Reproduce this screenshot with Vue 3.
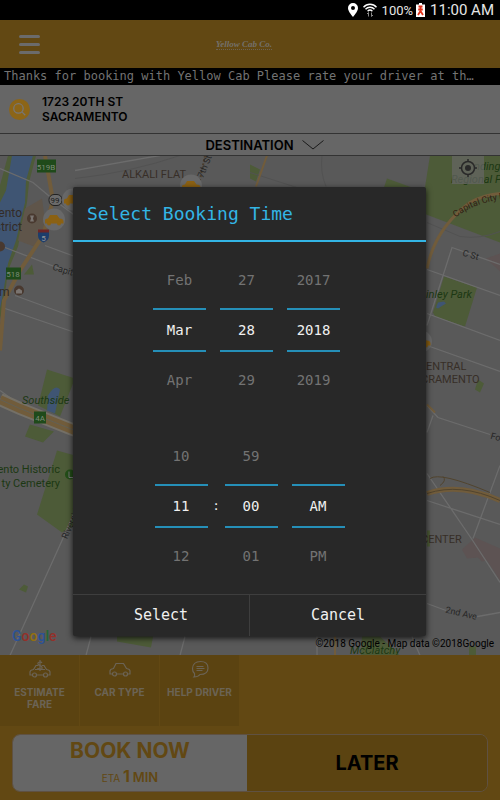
<script setup>
import { ref, computed } from 'vue'

const message = 'Thanks for booking with Yellow Cab Please rate your driver at th…'

const months = ['Jan', 'Feb', 'Mar', 'Apr', 'May', 'Jun', 'Jul', 'Aug', 'Sep', 'Oct', 'Nov', 'Dec']
const range = (from, to, pad = 1) =>
  Array.from({ length: to - from + 1 }, (_, i) => String(from + i).padStart(pad, '0'))

const dateWheels = ref([
  { name: 'Month', values: months, index: 2, wrap: true },
  { name: 'Day', values: range(1, 31), index: 27, wrap: true },
  { name: 'Year', values: range(2010, 2030), index: 8, wrap: false }
])
const timeWheels = ref([
  { name: 'Hour', values: range(1, 12), index: 10, wrap: true },
  { name: 'Minute', values: range(0, 59, 2), index: 0, wrap: true },
  { name: 'AM or PM', values: ['AM', 'PM'], index: 0, wrap: false }
])
const groups = computed(() => [
  { id: 'date', wheels: dateWheels.value },
  { id: 'time', wheels: timeWheels.value }
])

function at(wheel, step) {
  const n = wheel.values.length
  const i = wheel.index + step
  return wheel.wrap ? wheel.values[(i + n) % n] : wheel.values[i] ?? ''
}
function move(wheel, step) {
  if (at(wheel, step)) wheel.index = (wheel.index + step + wheel.values.length) % wheel.values.length
}

const googleLetters = [
  ['G', '#2c5296'], ['o', '#93302a'], ['o', '#94700f'], ['g', '#2c5296'], ['l', '#226834'], ['e', '#93302a']
]
const cars = [[73, 199], [54, 219], [191, 185], [421, 341]]
</script>

<template>
  <div class="screen">
    <div class="status">
      <svg class="pin" viewBox="0 0 10 14"><path fill="#fff" fill-rule="evenodd" d="M5 0a5 5 0 0 0-5 5c0 3 3 6.500 5 9 2-2.500 5-6 5-9a5 5 0 0 0-5-5zm0 3a2 2 0 1 1 0 4 2 2 0 0 1 0-4z" /></svg>
      <svg class="wifi" viewBox="0 0 14 14" fill="none" stroke="#fff" stroke-width="1.400">
        <path d="M.5 4.200C4 .3 10 .3 13.500 4.200M2.500 6.300c2.600-2.700 6.400-2.700 9 0M4.600 8.200c1.500-1.400 3.300-1.400 4.800 0" />
        <path stroke="#888" stroke-width="1" d="M5.500 13.500V9.500L4 11M8.500 9.500v4L10 12" />
      </svg>
      <span class="percent">100%</span>
      <svg class="battery" viewBox="0 0 9 14"><path fill="#fff" d="M3 0h3v1.500h3V14H0V1.500h3z" /><path fill="none" stroke="#e0341c" stroke-width="1.800" d="M2.500 3.500h4M4.500 4v4M2 12l2.500-4L7 12M2.200 6.500l4.600 0" /></svg>
      <time>11:00 AM</time>
    </div>

    <header class="topbar">
      <button class="menu" aria-label="Menu"><i></i><i></i><i></i></button>
      <div class="brand">Yellow Cab Co.</div>
    </header>

    <p class="ticker">{{ message }}</p>

    <section class="pickup">
      <button class="search" aria-label="Search address">
        <svg viewBox="0 0 20 20" fill="none" stroke="#777" stroke-width="1.200"><circle cx="9" cy="9" r="4.500" /><path d="M12.500 12.500l3 3" /></svg>
      </button>
      <address>1723 20TH ST<br>SACRAMENTO</address>
    </section>

    <button class="destination">
      <span>DESTINATION</span>
      <svg viewBox="0 0 22 10" fill="none" stroke="#1a1a1a"><path d="M.5 .5L11 9L21.500 .5" /></svg>
    </button>

    <main class="map">
      <svg class="canvas" viewBox="0 155 500 500" preserveAspectRatio="xMidYMid slice" role="img" aria-label="Map of Sacramento">
        <rect y="155" width="500" height="500" fill="#595959" />
        <g fill="#4d5b38">
          <path d="M0 185L8 155H36L29 182L27 202L18 246L8 270L3 310L0 318z" />
          <path d="M430 155H500V242L421 212z" /><path d="M387 178L412 187H384z" />
          <path d="M444 276L477 287L465 326L435 316L433 312z" />
          <path d="M47 369L75 378L60 416L38 405z" /><path d="M30 424L54 431L43 442L25 436z" />
          <path d="M57 450L75 455V525L62 532L37 514z" /><path d="M24 584L28 586L26 592L19 589z" />
          <path d="M250 164L260 169L256 181L250 178z" /><path d="M117 636H153L151 647L117 641z" />
          <path d="M478 379L484 383L480 392L475 389z" /><path d="M362 636H380L400 655H361z" />
          <path d="M469 646H476V655H469z" /><path d="M24 274L32 264L34 274z" /><path d="M427 530h3v16h-3z" />
        </g>
        <g fill="#3f5573">
          <path d="M0 202L6 190L12 155H33L26 180L25 202L16 240L8 263L3 293L0 308z" />
          <path d="M48 395Q55 383 60 389L55 413L47 410z" /><path d="M436 307l2-5 6-1 2 2-5 3-3 2z" />
        </g>
        <path fill="#5f554a" d="M25 208L42 198L47 235L34 246L18 240z" />
        <path fill="#5d5353" d="M486 258L500 253V271zM462 549L475 537L500 548V580L487 560L482 561L478 557L467 558z" />
        <g fill="none" stroke="#6c6c6c" stroke-width="1.300">
          <path d="M0 168L33 182L52 198L75 215M5 247L75 274M45 245L75 256M15 295L75 317M5 308L75 332M0 390L14 400M75 510L62 540L10 655M75 170Q130 160 160 155" />
          <path d="M427 325L452 247L500 264M427 269L500 295M427 313L500 340M427 345L500 371M427 405L438 417L490 434M427 432L433 415M427 473L472 539L500 582M427 500L500 524M473 538L500 465M427 603L446 610M472 617L500 612" />
          <path d="M86 655L91 636M180 655L185 636M317 636V655M412 636L420 655" />
        </g>
        <path fill="none" stroke="#525252" d="M427 222L460 236Q480 239 500 231M75 178Q130 172 180 155M250 172L300 188M322 155Q320 172 326 186" />
        <g fill="none" stroke="#715c3b">
          <path stroke-width="4" d="M45 155L53 200L43 235L20 270L4 300L0 350" />
          <path stroke-width="3" d="M427 268Q435 228 470 202Q485 194 500 193" />
          <path stroke-width="2" d="M267 155L256 186M335 636V655M427 404L435 412" />
          <path stroke="#747067" stroke-width="13" d="M0 399L20 408L75 430" />
          <path stroke-width="9" d="M0 399L20 408L75 430" />
          <path stroke="#626055" stroke-width="1" d="M0 399L20 408L75 430" />
          <path stroke-width="5" d="M427 493Q460 482 500 500" />
          <path stroke="#51442e" stroke-width="1" d="M427 493Q460 482 500 500M430 478Q440 471 490 492M440 485q7-5 3-9" />
          <path stroke="#4a3d2d" stroke-width="2" stroke-dasharray="2 2" d="M205 155L199 184" />
        </g>

        <g class="sign">
          <rect x="37" y="159" width="19" height="13" /><text x="46" y="169">519B</text>
          <rect x="6" y="267" width="15" height="12" /><text x="13" y="276">518</text>
          <rect x="34" y="411" width="12" height="12" /><text x="40" y="420">4A</text>
        </g>
        <rect x="49" y="194" width="13" height="11" rx="5" fill="#6b6b6b" stroke="#222" />
        <text x="55" y="202" class="route">99</text>
        <path d="M38 230h11v5q0 5-5.500 7q-5.500-2-5.500-7z" fill="#1d3d6b" /><path d="M38 229h11v3H38z" fill="#6d2626" />
        <text x="43.500" y="240" class="route light">5</text>
        <g fill="#49392f"><circle cx="32" cy="218" r="5" /><circle cx="0" cy="246" r="5" /><circle cx="19" cy="290" r="5" /></g>
        <path d="M30 215h4l-1 3 1 3h-4l1-3zM16 290l3-2 3 2v3h-6z" fill="#7a7470" />
        <circle cx="70" cy="474" r="5" fill="#234d18" /><path d="M69 471v6h4" stroke="#777" fill="none" />

        <g class="place">
          <text x="22" y="216" text-anchor="end">ento</text><text x="22" y="230" text-anchor="end">strict</text><text x="-1" y="295">m</text>
        </g>
        <g class="area">
          <text x="122" y="177">ALKALI FLAT</text><text x="426" y="369">ENTRAL</text><text x="421" y="382">CRAMENTO</text><text x="421" y="542">CENTER</text>
        </g>
        <g class="park">
          <text x="22" y="403">Southside</text><text x="426" y="297">inley Park</text><text x="474" y="169">nding</text><text x="451" y="182">Regional Par</text><text x="350" y="653">McClatchy</text>
        </g>
        <g class="green-place"><text x="60" y="472" text-anchor="end">ento Historic</text><text x="60" y="486" text-anchor="end">ty Cemetery</text></g>
        <g class="street">
          <text transform="translate(52 269) rotate(17)">Capitol</text><text transform="translate(67 539) rotate(-66)">Riverside</text>
          <text transform="translate(462 255) rotate(16)">C St</text><text transform="translate(490 438) rotate(16)">Fols</text>
          <text transform="translate(445 612) rotate(13)">2nd Ave</text><text transform="translate(203 178) rotate(-68)">7th St</text>
          <path id="freeway" fill="none" d="M456 217Q474 201 515 197" />
          <text class="freeway"><textPath href="#freeway">Capital City Fre</textPath></text>
        </g>
        <g v-for="([x, y], i) in cars" :key="i" :transform="`translate(${x} ${y})`">
          <circle r="11" fill="#686868" />
          <path fill="#8b6113" d="M-9 1q0-2 3-2l2-3.500h7l2.500 3.500q4 0 4 3v2H-9z" />
          <circle cx="-5" cy="4" r="2" fill="#8b6113" /><circle cx="5" cy="4" r="2" fill="#8b6113" />
        </g>
      </svg>
      <button class="locate" aria-label="My location">
        <svg viewBox="0 0 18 18" fill="none" stroke="#292929" stroke-width="1.500"><circle cx="9" cy="9" r="6.500" /><circle cx="9" cy="9" r="3" fill="#292929" stroke="none" /><path d="M9 0v3M9 15v3M0 9h3M15 9h3" /></svg>
      </button>
      <div class="google"><span v-for="([ch, color], i) in googleLetters" :key="i" :style="{ color }">{{ ch }}</span></div>
      <small class="credit">©2018 Google - Map data ©2018Google</small>
    </main>

    <footer class="bottom">
      <nav class="tiles">
        <button>
          <svg viewBox="0 0 22 18" fill="none" stroke="#6b6355" stroke-width="1.200">
            <path d="M3.500 15H1v-3q0-2 3.500-2.500L7 5.500h2M13 5.500h2l2.500 4q3.500.5 3.500 2.500v3h-2.500M7.500 15h7M6 9.500h10" />
            <circle cx="5.500" cy="15" r="2" /><circle cx="16.500" cy="15" r="2" />
            <path d="M13 3q-1-1.500-2.500-1Q8.500 2.500 9 4t2 1.500T13 7.500t-2 1.500-2.500-1M11 0v11" />
          </svg>
          <span>ESTIMATE FARE</span>
        </button>
        <button>
          <svg viewBox="0 0 22 18" fill="none" stroke="#6b6355" stroke-width="1.200">
            <path d="M3.500 14H1v-3q0-2 3.500-2.500L7 3.500h7.500l3 5Q21 9 21 11v3h-2.500M7.500 14h7" />
            <circle cx="5.500" cy="14" r="2" /><circle cx="16.500" cy="14" r="2" />
          </svg>
          <span>CAR TYPE</span>
        </button>
        <button>
          <svg viewBox="0 0 22 18" fill="none" stroke="#6b6355" stroke-width="1.200">
            <path d="M5 17q1-1 .5-3.500Q3.500 12 3.500 8.500 4 1.500 11.500 1.500t7.500 6.500-8 6.500Q9 17 5 17z" /><path d="M7.500 6.500h7M7.500 8.500h8M7.500 10.500h6" />
          </svg>
          <span>HELP DRIVER</span>
        </button>
      </nav>
      <div class="booking">
        <button class="now"><strong>BOOK NOW</strong><span class="eta">ETA <b>1</b> <em>MIN</em></span></button>
        <button class="later">LATER</button>
      </div>
    </footer>

    <div class="overlay">
      <section class="dialog" role="dialog" aria-modal="true" aria-labelledby="dialog-title">
        <h2 id="dialog-title">Select Booking Time</h2>
        <div v-for="group in groups" :key="group.id" class="picker" :class="group.id">
          <template v-for="(wheel, i) in group.wheels" :key="wheel.name">
            <span v-if="group.id === 'time' && i === 1" class="colon">:</span>
            <div class="wheel">
              <button @click="move(wheel, -1)">{{ at(wheel, -1) }}</button>
              <input :value="at(wheel, 0)" :aria-label="wheel.name" readonly>
              <button @click="move(wheel, 1)">{{ at(wheel, 1) }}</button>
            </div>
          </template>
        </div>
        <div class="actions"><button>Select</button><button>Cancel</button></div>
      </section>
    </div>
  </div>
</template>

<style>
body { margin: 0; background: #000; }
</style>

<style scoped>
.screen {
  position: relative;
  display: flex;
  flex-direction: column;
  min-height: 100vh;
  color: #000;
  font-family: Inter, "Open Sans", sans-serif;
}
button, input { margin: 0; padding: 0; border: 0; background: none; color: inherit; font: inherit; }
button { cursor: pointer; }
svg { display: block; }

.status {
  display: flex;
  align-items: center;
  justify-content: flex-end;
  height: 20px;
  padding-right: 6px;
  color: #e6e6e6;
  font-family: Roboto, sans-serif;
  font-size: 15px;
}
.pin { width: 10px; height: 14px; margin-right: 5px; }
.wifi { width: 14px; height: 14px; margin-right: 5px; }
.percent { font-size: 13px; }
.battery { width: 9px; height: 14px; margin: 0 5px 0 3px; }

.topbar {
  display: grid;
  grid-template-columns: 1fr auto 1fr;
  align-items: center;
  height: 48px;
  padding-right: 12px;
  box-sizing: border-box;
  background: #624813;
}
.menu { display: flex; flex-direction: column; gap: 5px; width: 21px; margin-left: 19px; }
.menu i { height: 3px; border-radius: 2px; background: #6b6b6b; }
.brand {
  border-bottom: 1px dotted #6b6355;
  color: #74706a;
  font: italic bold 9px/10px "Liberation Serif", serif;
}
.ticker {
  height: 17px;
  margin: 0;
  padding: 0 4px;
  overflow: hidden;
  background: #000;
  color: #737373;
  font: 12px/17px "DejaVu Sans Mono", monospace;
  white-space: nowrap;
}
.pickup { display: flex; align-items: center; gap: 12px; height: 48px; padding-left: 9px; background: #666; }
.search { width: 21px; height: 21px; border-radius: 50%; background: #8c6517; }
address { font: 600 12px/15px Inter, sans-serif; }
.destination {
  display: flex;
  align-items: center;
  justify-content: center;
  gap: 8px;
  height: 23px;
  padding-left: 29px;
  border-top: 1px solid #333;
  border-bottom: 1px solid #333;
  background: #666;
  font-size: 13px;
  font-weight: 600;
}
.destination svg { width: 22px; height: 10px; }

.map { position: relative; flex: 1; min-height: 499px; overflow: hidden; }
.canvas { position: absolute; width: 100%; height: 100%; }
.canvas text { font-family: Roboto, sans-serif; }
.sign rect { fill: #1f4a1a; }
.sign text { fill: #7c8a78; font-size: 8px; text-anchor: middle; }
.canvas .route { fill: #1a1a1a; font-size: 8px; text-anchor: middle; }
.canvas .light { fill: #999; }
.place { fill: #332b27; font-size: 12px; }
.area { fill: #372e27; font-size: 11px; }
.park { fill: #1c3813; font-size: 11px; font-style: italic; }
.green-place { fill: #1c3813; font-size: 11px; }
.street { fill: #262626; font-size: 9px; }
.freeway { fill: #301e12; font-size: 9px; }
.locate {
  position: absolute;
  top: 0;
  right: 16px;
  display: grid;
  place-items: start center;
  width: 32px;
  height: 28px;
  padding-top: 3px;
  background: rgba(102, 102, 102, 0.7);
}
.locate svg { width: 18px; height: 18px; }
.google { position: absolute; left: 12px; bottom: 9px; font: 500 14px/20px Roboto, sans-serif; }
.credit { position: absolute; right: 6px; bottom: 4px; font: 10px/14px Roboto, sans-serif; }

.bottom { background: #624813; }
.tiles { display: flex; gap: 1px; height: 71px; }
.tiles button {
  display: flex;
  flex-direction: column;
  align-items: center;
  width: 79px;
  padding: 5px 2px 0;
  background: #5b4311;
  color: #6b6355;
  font-size: 10px;
  font-weight: 700;
  line-height: 12px;
}
.tiles svg { width: 22px; height: 18px; margin-bottom: 8px; }
.booking {
  display: flex;
  height: 56px;
  margin: 8px 12px;
  border: 1px solid #5f5142;
  border-radius: 8px;
  overflow: hidden;
}
.booking button { flex: 1; }
.booking .now {
  display: flex;
  flex: 0 0 calc(50% - 3px);
  flex-direction: column;
  align-items: center;
  justify-content: center;
  background: #666;
  color: #624813;
}
.now strong { font-size: 21px; font-weight: 700; line-height: 28px; }
.eta { font-size: 10px; line-height: 22px; }
.eta b { font-size: 16px; }
.eta em { font-size: 13px; font-style: normal; font-weight: 600; }
.booking .later { background: #5b4311; font-size: 20px; font-weight: 700; }

.overlay {
  position: absolute;
  inset: 22px 1px 0 0;
  display: flex;
  align-items: center;
  justify-content: center;
}
.dialog {
  width: calc(100% - 146px);
  max-width: 420px;
  border-radius: 2px;
  background: #282828;
  box-shadow: 0 2px 6px rgba(0, 0, 0, 0.8);
  color: #f0f0f0;
  font-family: "DejaVu Sans Mono", monospace;
}
h2 {
  margin: 0;
  padding-left: 14px;
  border-bottom: 2px solid #33b5e5;
  color: #33b5e5;
  font-size: 18px;
  font-weight: 400;
  line-height: 53px;
}
.picker { display: flex; align-items: center; justify-content: center; gap: 14px; height: 176px; font-size: 14px; }
.date { padding-right: 6px; }
.wheel { display: flex; flex-direction: column; width: 53px; }
.wheel button { height: 56px; color: #737373; }
.wheel input {
  width: 100%;
  height: 44px;
  box-sizing: border-box;
  border-top: 2px solid #258fb8;
  border-bottom: 2px solid #258fb8;
  text-align: center;
}
.colon { width: 17px; margin: 0 -14px; font-size: 12px; text-align: center; }
.actions { display: flex; border-top: 1px solid #3e3e3e; }
.actions button { flex: 1; height: 41px; font-size: 15px; }
.actions button + button { border-left: 1px solid #3e3e3e; }
</style>
